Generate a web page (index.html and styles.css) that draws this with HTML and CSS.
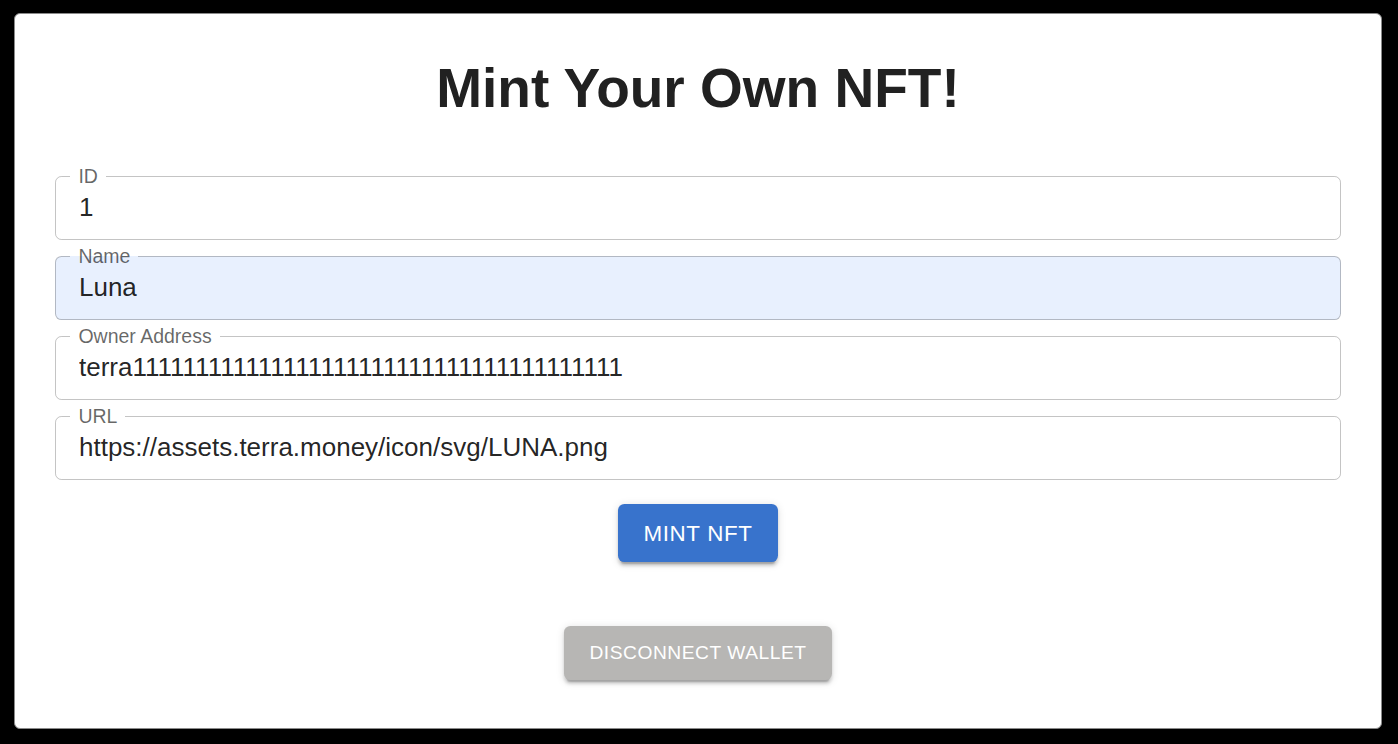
FILE: index.html
```html
<!DOCTYPE html>
<html lang="en">
<head>
<meta charset="utf-8">
<title>Mint Your Own NFT!</title>
<link rel="stylesheet" href="styles.css">
</head>
<body>
  <main class="card">
    <h1 class="title">Mint Your Own NFT!</h1>
    <form class="form">
      <fieldset class="field">
        <legend class="field-label">ID</legend>
        <input class="field-input" type="text" value="1">
      </fieldset>
      <fieldset class="field field-autofill">
        <legend class="field-label">Name</legend>
        <input class="field-input" type="text" value="Luna">
      </fieldset>
      <fieldset class="field">
        <legend class="field-label">Owner Address</legend>
        <input class="field-input" type="text" value="terra111111111111111111111111111111111111111">
      </fieldset>
      <fieldset class="field">
        <legend class="field-label">URL</legend>
        <input class="field-input" type="text" value="https://assets.terra.money/icon/svg/LUNA.png">
      </fieldset>
      <button class="btn btn-primary" type="button">Mint NFT</button>
    </form>
    <button class="btn btn-secondary" type="button">Disconnect Wallet</button>
  </main>
</body>
</html>
```

FILE: styles.css
```css
* {
  box-sizing: border-box;
}

html, body {
  margin: 0;
  height: 100%;
}

body {
  background: #000;
  padding: 13px 16px 15px 14px;
  display: flex;
  flex-direction: column;
  font-family: "Liberation Sans", Arial, Helvetica, sans-serif;
}

.card {
  flex: 1;
  background: #fff;
  border: 1px solid #8a8a8a;
  border-radius: 6px;
  padding: 43px 40px 0;
  display: flex;
  flex-direction: column;
  align-items: center;
}

.title {
  margin: 0 0 46px;
  font-size: 55px;
  font-weight: 700;
  line-height: 1.149;
  color: #212121;
  text-align: center;
}

.form {
  width: 100%;
  display: flex;
  flex-direction: column;
  align-items: center;
  gap: 6.5px;
}

.field {
  width: 100%;
  margin: 0;
  padding: 0 14.4px;
  border: 1px solid rgba(0, 0, 0, 0.23);
  border-radius: 6.4px;
  background: transparent;
}

.field-autofill {
  background: #e8f0fe;
}

.field-label {
  padding: 0 8px;
  height: 20px;
  font-size: 19.5px;
  line-height: 20px;
  color: rgba(0, 0, 0, 0.6);
}

.field-input {
  display: block;
  width: 100%;
  margin: 0;
  border: 0;
  outline: 0;
  background: transparent;
  padding: 3px 8.6px 12.8px;
  height: 52.6px;
  font-family: inherit;
  font-size: 26px;
  line-height: 36.8px;
  color: rgba(0, 0, 0, 0.87);
}

.btn {
  border: 0;
  border-radius: 6.4px;
  color: #fff;
  font-family: inherit;
  text-transform: uppercase;
  letter-spacing: 0.02857em;
  line-height: 1.75;
  cursor: pointer;
  box-shadow: 0 4.8px 1.6px -3.2px rgba(0, 0, 0, 0.2),
              0 3.2px 3.2px 0 rgba(0, 0, 0, 0.14),
              0 1.6px 8px 0 rgba(0, 0, 0, 0.12);
}

.btn-primary {
  margin-top: 17.5px;
  background: #3873cc;
  font-size: 22.4px;
  padding: 9.6px 25.6px;
}

.btn-secondary {
  margin-top: 64px;
  background: #b7b6b4;
  font-size: 19.2px;
  padding: 10px 25.6px;
}
```
